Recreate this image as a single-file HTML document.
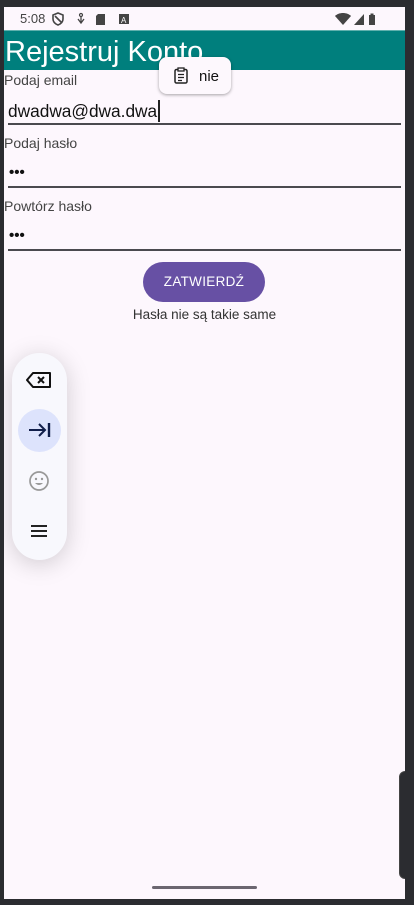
<!DOCTYPE html>
<html><head><meta charset="utf-8"><style>
*{margin:0;padding:0;box-sizing:border-box}
body{width:414px;height:905px;background:#2b2c30;position:relative;overflow:hidden;font-family:"Liberation Sans",sans-serif}
.scr{position:absolute;left:4px;top:7px;width:401px;height:892px;background:#fdf7fd;overflow:hidden}
.abs{position:absolute}
.lbl{position:absolute;left:0;font-size:14px;color:#444}
.ln{position:absolute;left:4px;width:393px;height:2px;background:#4a4a4f}
.dots{position:absolute;left:5px;font-size:15px;color:#111;letter-spacing:0px;font-weight:bold}
</style></head><body>
<div class="scr">
 <div class="abs" style="left:16px;top:4px;font-size:13px;color:#444">5:08</div>
 <svg class="abs" style="left:48px;top:5px" width="90" height="14" viewBox="0 0 90 14">
  <path d="M6 1 L11 3 V7 C11 10 8.5 12 6 13 C3.5 12 1 10 1 7 V3Z M3 4 L9 10" fill="none" stroke="#444" stroke-width="1.6"/>
  <circle cx="29" cy="3" r="1.5" fill="none" stroke="#444" stroke-width="1.2"/><path d="M26 7 L29 11 L32 7 M29 5 V10" fill="none" stroke="#444" stroke-width="1.3"/>
  <path d="M46 2 H53 V13 H44 V4Z" fill="#444"/>
  <rect x="67" y="2" width="10" height="10" fill="#444"/><text x="69" y="11" font-size="8" fill="#fff" font-family="Liberation Sans">A</text>
 </svg>
 <svg class="abs" style="left:330px;top:5px" width="46" height="14" viewBox="0 0 46 14">
  <path d="M1 4 C5 0 13 0 17 4 L9 13Z" fill="#444"/>
  <path d="M20 13 L30 2 V13Z" fill="#444"/>
  <rect x="35" y="3" width="6" height="10" fill="#444"/><rect x="36.5" y="1.5" width="3" height="2" fill="#444"/>
 </svg>
 <div class="abs" style="left:0;top:23px;width:401px;height:40px;background:#007f7d"></div>
 <div class="abs" style="left:0;top:23px;width:401px;height:1px;background:#5fb0ad"></div>
 <div class="abs" style="left:1px;top:27px;font-size:29px;color:#fff;line-height:36px">Rejestruj Konto</div>
 <div class="abs" style="left:155px;top:50px;width:72px;height:37px;background:#fdf8fd;border-radius:8px;box-shadow:0 1px 3px rgba(0,0,0,.35)"></div>
 <svg class="abs" style="left:169px;top:60px" width="16" height="17" viewBox="0 0 16 17"><rect x="2" y="2.5" width="12" height="13.5" rx="1.5" fill="none" stroke="#222" stroke-width="1.5"/><rect x="5" y="1" width="6" height="3" fill="#fdf8fd" stroke="#222" stroke-width="1.3"/><path d="M5 7.5H11M5 10.5H11M5 13.5H9" stroke="#222" stroke-width="1.3"/></svg>
 <div class="abs" style="left:195px;top:61px;font-size:15px;color:#111">nie</div>

 <div class="lbl" style="top:65px">Podaj email</div>
 <div class="abs" style="left:4px;top:94px;font-size:17.3px;color:#111">dwadwa@dwa.dwa</div>
 <div class="abs" style="left:154px;top:93px;width:2px;height:22px;background:#222"></div>
 <div class="ln" style="top:116px"></div>
 <div class="lbl" style="top:128px">Podaj hasło</div>
 <div class="dots" style="top:157px">•••</div>
 <div class="ln" style="top:179px"></div>
 <div class="lbl" style="top:191px">Powtórz hasło</div>
 <div class="dots" style="top:220px">•••</div>
 <div class="ln" style="top:242px"></div>
 <div class="abs" style="left:139px;top:255px;width:122px;height:40px;border-radius:20px;background:#6750a4;color:#fff;font-size:13.5px;text-align:center;line-height:40px;letter-spacing:.3px">ZATWIERDŹ</div>
 <div class="abs" style="left:0;top:300px;width:401px;text-align:center;font-size:13.5px;color:#333">Hasła nie są takie same</div>

 <div class="abs" style="left:8px;top:346px;width:55px;height:207px;border-radius:28px;background:#f8f8fd;box-shadow:0 4px 24px rgba(0,0,0,.18)"></div>
 <svg class="abs" style="left:22px;top:364px" width="26" height="18" viewBox="0 0 26 18"><path d="M7 2 H24 V16 H7 L1 9Z" fill="none" stroke="#111" stroke-width="2" stroke-linejoin="round"/><path d="M12 6 L18 12 M18 6 L12 12" stroke="#111" stroke-width="2"/></svg>
 <div class="abs" style="left:14px;top:402px;width:43px;height:43px;border-radius:50%;background:#dde3fc"></div>
 <svg class="abs" style="left:24px;top:414px" width="24" height="18" viewBox="0 0 24 18"><path d="M1 9 H17 M11 3 L17 9 L11 15" fill="none" stroke="#111e4a" stroke-width="2"/><path d="M21 2 V16" stroke="#111e4a" stroke-width="2.4"/></svg>
 <svg class="abs" style="left:24px;top:463px" width="22" height="22" viewBox="0 0 22 22"><circle cx="11" cy="11" r="9" fill="none" stroke="#999" stroke-width="1.7"/><circle cx="8" cy="9" r="1.2" fill="#999"/><circle cx="14" cy="9" r="1.2" fill="#999"/><path d="M7 13 Q11 17 15 13Z" fill="#999"/></svg>
 <svg class="abs" style="left:26px;top:517px" width="18" height="14" viewBox="0 0 18 14"><path d="M1 2H17M1 7H17M1 12H17" stroke="#222" stroke-width="2"/></svg>

 <div class="abs" style="left:395px;top:764px;width:20px;height:108px;background:#2b2c30;border-radius:6px 0 0 6px;border:1px solid #444"></div>
 <div class="abs" style="left:401px;top:768px;color:#ddd;font-size:18px">+</div>
 <div class="abs" style="left:401px;top:795px;width:10px;height:1px;background:#666"></div>
 <div class="abs" style="left:401px;top:824px;color:#bbb;font-size:10px;font-weight:bold">1:</div>
 <div class="abs" style="left:148px;top:879px;width:105px;height:3px;background:#6b6670;border-radius:2px"></div>
</div>
</body></html>
